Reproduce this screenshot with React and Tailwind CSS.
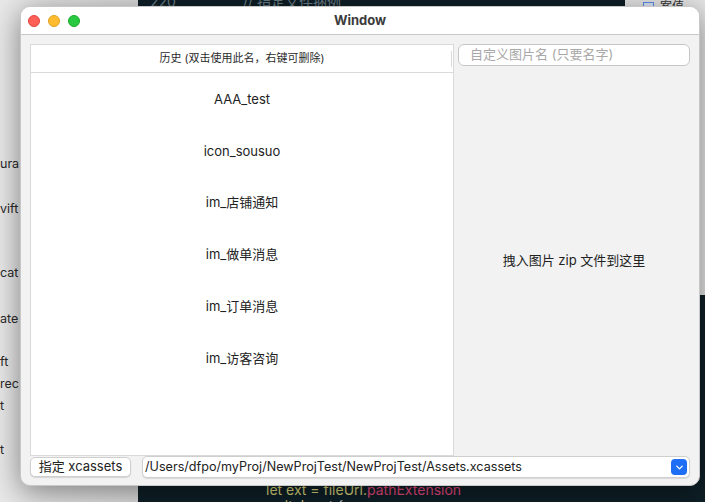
import { ChevronDown } from 'lucide-react';

const history = ['AAA_test', 'icon_sousuo', 'im_店铺通知', 'im_做单消息', 'im_订单消息', 'im_访客咨询'];

const sidebarBits = [
  { text: 'ura', top: 'mt-[155px]' },
  { text: 'vift', top: 'mt-[27px]' },
  { text: 'cat', top: 'mt-[46px]' },
  { text: 'ate', top: 'mt-[28px]' },
  { text: 'ft', top: 'mt-[25px]' },
  { text: 'rec', top: 'mt-[4px]' },
  { text: 't', top: 'mt-[4px]' },
  { text: 't', top: 'mt-[26px]' },
];

function Backdrop() {
  return (
    <div className="absolute inset-0 flex">
      {/* Xcode navigator */}
      <div className="w-[138px] h-full bg-gradient-to-r from-[#e9e9e9] to-[#dcdcdc] flex flex-col text-[12.5px] text-[#2a2a2a] leading-[18px]">
        {sidebarBits.map((b, i) => (
          <span key={i} className={b.top}>{b.text}</span>
        ))}
      </div>
      {/* editor */}
      <div className="flex-1 h-full bg-[#0e1f27] flex flex-col overflow-hidden">
        <div className="flex items-start -mt-[9px] text-[14px] text-[#6b7d86]">
          <span className="w-[45px] pl-[12px]">220</span>
          <span className="ml-[60px]">// 指定文件捆例</span>
        </div>
        <div className="mt-auto flex flex-col text-[14px] leading-[16px] pl-[128px] mb-[-12px]">
          <span className="text-[#d8d27a]">let ext = fileUrl.<span className="text-[#e2477d]">pathExtension</span></span>
          <span className="text-[#d8d27a]">switch <span className="text-[#c8c8c8]">ext {'{'}</span></span>
        </div>
      </div>
      <div className="w-[80px] h-full flex flex-col">
        <div className="h-[295px] bg-[#e6e6e6] flex text-[12px] text-[#333]">
          <div className="ml-[18px] mt-[2px] w-[11px] h-[11px] border border-[#5b8ee8] bg-[#dfe8fb]" />
          <span className="ml-[6px] -mt-[2px]">案值</span>
        </div>
        <div className="flex-1 bg-[#0e1f27]" />
      </div>
    </div>
  );
}

export default function App() {
  return (
    <div
      className="relative w-[705px] h-[502px] overflow-hidden"
      style={{ fontFamily: 'Inter, "Noto Sans CJK SC", sans-serif' }}
    >
      <Backdrop />

      {/* Window */}
      <div className="absolute left-[20px] top-[6px] w-[680px] h-[480px] rounded-[10px] bg-[#f2f2f2] overflow-hidden flex flex-col shadow-[0_6px_30px_rgba(0,0,0,0.45)] border border-[#c8c8c8]">
        {/* Title bar */}
        <div className="h-[28px] shrink-0 bg-white border-b border-[#c9c9c9] flex items-center px-[7px] relative">
          <div className="flex gap-[8px]">
            <span className="w-[12px] h-[12px] rounded-full bg-[#fe5f57] border border-[#e0443e]" />
            <span className="w-[12px] h-[12px] rounded-full bg-[#febc2e] border border-[#dea123]" />
            <span className="w-[12px] h-[12px] rounded-full bg-[#28c840] border border-[#1aab29]" />
          </div>
          <span className="absolute inset-x-0 text-center text-[13px] font-bold text-[#3b3b3b] pointer-events-none">Window</span>
        </div>

        {/* Body */}
        <div className="flex-1 flex flex-col pt-[9px] px-[9px] pb-[7px]">
          <div className="flex-1 flex">
            {/* History table */}
            <div className="w-[424px] bg-white border border-[#dadada] flex flex-col">
              <div className="h-[28px] shrink-0 border-b border-[#dadada] flex items-center justify-center text-[11px] text-[#2b2b2b] relative">
                历史 (双击使用此名，右键可删除)
                <span className="absolute right-[1px] top-[6px] w-[1px] h-[16px] bg-[#dadada]" />
              </div>
              <div className="flex flex-col pt-[1px]">
                {history.map((h) => (
                  <div key={h} className="h-[51.7px] flex items-center justify-center text-[13px] text-[#222]">
                    {h}
                  </div>
                ))}
              </div>
            </div>

            {/* Right panel */}
            <div className="flex-1 flex flex-col pl-[4px]">
              <div className="h-[22px] rounded-[6px] bg-white border border-[#c6c6c6] flex items-center px-[11px] text-[13px] text-[#a8a8a8]">
                自定义图片名 (只要名字)
              </div>
              <div className="flex-1 flex items-center justify-center text-[13px] text-[#222]">
                拽入图片 zip 文件到这里
              </div>
            </div>
          </div>

          {/* Bottom bar */}
          <div className="h-[22px] flex items-center">
            <button className="w-[101px] h-[20px] rounded-[5px] bg-white border border-[#cfcfcf] shadow-[0_1px_1px_rgba(0,0,0,0.12)] text-[13px] text-[#222] flex items-center justify-center">
              指定 xcassets
            </button>
            <div className="ml-[11px] flex-1 h-[22px] rounded-[5px] bg-white border border-[#cfcfcf] shadow-[0_1px_1px_rgba(0,0,0,0.1)] flex items-center pl-[2px] pr-[2px]">
              <span className="flex-1 text-[12.6px] text-[#222] whitespace-nowrap overflow-hidden">
                /Users/dfpo/myProj/NewProjTest/NewProjTest/Assets.xcassets
              </span>
              <span className="w-[16px] h-[16px] rounded-[4px] bg-[#1e6ff6] flex items-center justify-center">
                <ChevronDown size={11} strokeWidth={3} className="text-white" />
              </span>
            </div>
          </div>
        </div>
      </div>
    </div>
  );
}
